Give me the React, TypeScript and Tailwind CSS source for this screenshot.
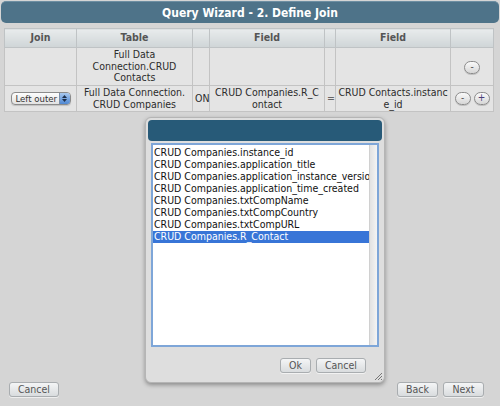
import React from "react";

const F = { fontFamily: "'DejaVu Sans Condensed','DejaVu Sans',sans-serif" };

function Btn({ children, w }: { children: React.ReactNode; w: string }) {
  return (
    <div
      className={`${w} h-[15px] rounded-[3px] border border-[#a9adb0] bg-gradient-to-b from-[#f4f5f6] to-[#d9dcde] flex items-center justify-center text-[10.5px] text-[#555] leading-none shadow-[0_1px_0_rgba(255,255,255,0.6)]`}
    >
      {children}
    </div>
  );
}

function Circle({ sign }: { sign: string }) {
  return (
    <div className="w-[16px] h-[13px] rounded-full border border-[#8c8c8c] bg-gradient-to-b from-[#fafafa] to-[#d6d6d6] flex items-center justify-center text-[10px] leading-none text-[#555] shadow-[0_1px_0_rgba(0,0,0,0.15)]">
      <span className={sign === "+" ? "text-[#4a3f7a] -mt-[1px]" : "-mt-[2px]"}>{sign}</span>
    </div>
  );
}

export default function App() {
  const items = [
    "CRUD Companies.instance_id",
    "CRUD Companies.application_title",
    "CRUD Companies.application_instance_version",
    "CRUD Companies.application_time_created",
    "CRUD Companies.txtCompName",
    "CRUD Companies.txtCompCountry",
    "CRUD Companies.txtCompURL",
    "CRUD Companies.R_Contact",
  ];
  const td = "border border-[#c3c3c3] bg-[#e4e4e4] text-center align-middle text-[#2c2c2c] px-[2px]";
  const th = "border border-[#bfc3c5] bg-gradient-to-b from-[#e8ebec] to-[#cfd5d7] text-center text-[#555] font-bold h-[19px] p-0";
  return (
    <div style={F} className="relative w-[500px] h-[406px] bg-[#d5d5d5] overflow-hidden flex flex-col font-stretch-condensed">
      <div className="mx-[1px] mt-[1px] h-[22px] rounded-[5px] bg-[#4e7389] flex items-center justify-center text-white font-bold text-[12px] border-t border-[#6d8ea2]">
        Query Wizard - 2. Define Join
      </div>
      <table className="ml-[4px] mt-[5px] w-[489px] border-collapse table-fixed text-[10.5px] leading-[11.5px]">
        <colgroup>
          <col className="w-[72px]" />
          <col className="w-[116px]" />
          <col className="w-[17px]" />
          <col className="w-[115px]" />
          <col className="w-[11px]" />
          <col className="w-[115px]" />
          <col className="w-[43px]" />
        </colgroup>
        <thead>
          <tr>
            <th className={th}>Join</th>
            <th className={th}>Table</th>
            <th className={th}></th>
            <th className={th}>Field</th>
            <th className={th}></th>
            <th className={th}>Field</th>
            <th className={th}></th>
          </tr>
        </thead>
        <tbody>
          <tr className="h-[38px]">
            <td className={td}></td>
            <td className={td}>
              Full Data
              <br />
              Connection.CRUD
              <br />
              Contacts
            </td>
            <td className={td}></td>
            <td className={td}></td>
            <td className={td}></td>
            <td className={td}></td>
            <td className={td}>
              <div className="flex justify-center pt-[2px]">
                <Circle sign="-" />
              </div>
            </td>
          </tr>
          <tr className="h-[26px]">
            <td className={td}>
              <div className="flex justify-center">
                <div className="w-[60px] h-[13px] rounded-[4px] border border-[#8b8b8b] bg-gradient-to-b from-[#fdfdfd] to-[#e2e2e2] flex items-center text-[9.5px] leading-none text-[#333] overflow-hidden whitespace-nowrap shadow-[0_1px_1px_rgba(0,0,0,0.15)]">
                  <span className="flex-1 pl-[4px] text-left">Left outer</span>
                  <div className="w-[11px] h-full shrink-0 bg-gradient-to-b from-[#a8c8ee] to-[#4f88d3] border-l border-[#7a8ea8] flex flex-col items-center justify-center gap-[1px]">
                    <svg width="5" height="3" viewBox="0 0 5 3"><path d="M0 3 L2.5 0 L5 3Z" fill="#1d2f4a" /></svg>
                    <svg width="5" height="3" viewBox="0 0 5 3"><path d="M0 0 L2.5 3 L5 0Z" fill="#1d2f4a" /></svg>
                  </div>
                </div>
              </div>
            </td>
            <td className={td}>
              Full Data Connection.
              <br />
              CRUD Companies
            </td>
            <td className={td}>ON</td>
            <td className={td}>
              CRUD Companies.R_C
              <br />
              ontact
            </td>
            <td className={`${td} text-[#666]`}>=</td>
            <td className={td}>
              CRUD Contacts.instanc
              <br />
              e_id
            </td>
            <td className={td}>
              <div className="flex justify-center gap-[3px]">
                <Circle sign="-" />
                <Circle sign="+" />
              </div>
            </td>
          </tr>
        </tbody>
      </table>
      <div className="flex-1" />
      <div className="flex items-center pl-[9px] pr-[16px] pb-[9px]">
        <Btn w="w-[50px]">Cancel</Btn>
        <div className="flex-1" />
        <div className="flex gap-[5px]">
          <Btn w="w-[41px]">Back</Btn>
          <Btn w="w-[41px]">Next</Btn>
        </div>
      </div>

      {/* modal dialog */}
      <div className="absolute left-[145px] top-[117px] w-[240px] h-[266px] rounded-[6px] bg-[#dedede] border border-[#b5b5b5] shadow-[0_2px_4px_rgba(0,0,0,0.35)] flex flex-col p-[1px]">
        <div className="h-[21px] mx-[1px] mt-[1px] rounded-[4px] bg-[#275a78]" />
        <div className="mt-[2px] ml-[4px] w-[228px] h-[204px] border-2 border-[#7ea6d8] bg-white flex">
          <div className="flex-1 pt-[2px] overflow-hidden text-[10.5px] text-[#111]">
            {items.map((t, i) => (
              <div
                key={t}
                className={`pl-[1px] whitespace-nowrap h-[12px] leading-[11px] ${i === 7 ? "bg-[#3875d7] text-white" : ""}`}
              >
                {t}
              </div>
            ))}
          </div>
          <div className="w-[8px] bg-gradient-to-r from-[#e2e2e2] to-[#f4f4f4] border-l border-[#d0d0d0]" />
        </div>
        <div className="flex justify-end gap-[5px] mt-[11px] pr-[17px]">
          <Btn w="w-[31px]">Ok</Btn>
          <Btn w="w-[50px]">Cancel</Btn>
        </div>
        <svg className="absolute right-[2px] bottom-[2px]" width="8" height="8" viewBox="0 0 8 8">
          <path d="M8 1 L1 8 M8 4 L4 8 M8 7 L7 8" stroke="#777" strokeWidth="1" />
        </svg>
      </div>
    </div>
  );
}
